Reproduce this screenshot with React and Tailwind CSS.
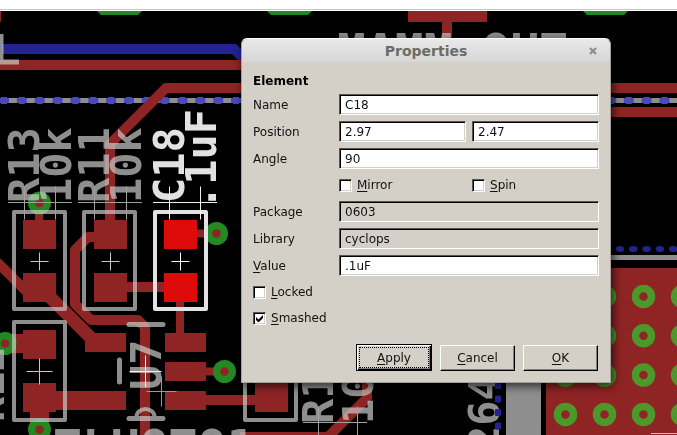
import React from "react";

const COPPER = "#8f2424";
const VIA = "#238a23";
const steps = (n) => Array.from({ length: n }, (_, i) => i);

function Via({ x, y }) {
  return (
    <g>
      <circle cx={x} cy={y} r="11.5" fill={VIA} />
      <circle cx={x} cy={y} r="4.3" fill={COPPER} />
    </g>
  );
}

function Cross({ x, y, r = 9, color = "#c8c8c8" }) {
  return <path d={`M${x - r} ${y}H${x + r}M${x} ${y - r}V${y + r}`} stroke={color} strokeWidth="1" />;
}

function Origin({ x, y, a, b, color = "#a0a0a0" }) {
  return <path d={`M${x} ${y}h64M${a} ${y - 16}v33M${b} ${y - 16}v33`} stroke={color} strokeWidth="1" />;
}

function Label({ x, y, children }) {
  return (
    <text transform={`translate(${x} ${y}) rotate(-90)`}>{children}</text>
  );
}

function Board() {
  return (
    <svg viewBox="0 11 677 424" className="block h-auto w-full" fill="none" aria-label="Circuit board">
      <g stroke="#232391" strokeWidth="10">
        <path d="M2 49H234L246 61" />
      </g>
      <path d="M0 100.5H677" stroke="#8e8e8e" strokeWidth="5" />
      <g fill="#4a4abf">
        {steps(38).map((i) => (
          <path key={i} transform={`translate(${4 + i * 17.85} 100.5)`} d="M-5-2.5h2v-1h6v1h2v5h-2v1h-6v-1h-2z" />
        ))}
      </g>
      <g stroke={COPPER} strokeWidth="10" strokeLinejoin="round">
        <path d="M0 65H245" />
        <path d="M677 88H166L110 144V222" />
        <path d="M610 112H677" />
        <path d="M-3 262L26 291" />
        <path d="M48 295L94 341" strokeWidth="13" />
        <path d="M97 237H88L75 250V304L91 320H138L145 327V435" />
        <path d="M127 287H164" />
        <path d="M206 400H256" />
        <path d="M240 437H328L367 398V380" />
        <path d="M39 203V222M180 300V334M197 233.500H216M206 371.500H224" strokeWidth="8" />
      </g>
      <g fill={COPPER}>
        <path d="M408 11h79v11h-35v20h-10V22h-34zM0 11h1v11H0z" />
        <path d="M23 220h33v29H23zM23 273h33v29H23zM94 220h33v29H94zM94 273h33v29H94z" />
        <path d="M23 330h33v29H23zM23 383h33v29H23zM56 391h70v19H56zM0 334h23v19H0zM30 412h19v20H30z" />
        <path d="M85 333h41v19H85zM165 333h41v19h-41zM165 362h41v19h-41zM165 391h41v19h-41zM255 383h33v29h-33z" />
      </g>
      <path d="M164 220h33v29h-33zM164 273h33v29h-33z" fill="#de0b0b" />
      <g fill={VIA}>
        {[97, 267, 583].map((x) => (
          <path key={x} d={`M${x} 11h45l-4 4h-37z`} />
        ))}
      </g>
      <Via x={39.5} y={203} />
      <Via x={216.5} y={233.5} />
      <Via x={5} y={343.500} />
      <Via x={39.5} y={429.5} />
      <Via x={224.5} y={371.5} />

      <g opacity="0.7" stroke="#cccccc" strokeWidth="4" strokeLinejoin="round">
        <path d="M14 212h51v97H14zM84 212h51v97H84zM14 322h51v98H14zM245 322h51v98h-51z" />
        <path d="M1 34V62M0 62H19" strokeWidth="5" />
        <path d="M129 324.500H163M129 418.500H163M119.500 360V382" strokeWidth="5" strokeLinecap="round" />
        <path d="M136.500 417A9 8 0 0 1 154.500 417" strokeWidth="4" />
        <g
          fill="#cccccc"
          stroke="none"
          className="font-['DejaVu_Sans_Mono',monospace] text-[42px] font-bold"
        >
          <Label x={39} y={203}>R13</Label>
          <Label x={71} y={203}>10k</Label>
          <Label x={109} y={203}>R11</Label>
          <Label x={141} y={203}>10k</Label>
          <Label x={161} y={390}>U7</Label>
          <Label x={4} y={422}>R12</Label>
          <Label x={333} y={424}>R1</Label>
          <Label x={373} y={424}>10</Label>
          <Label x={499} y={451}>264</Label>
          <text x="53" y="464" className="text-[48px]">TLUOTO1</text>
          <text x="337" y="68" className="text-[48px]">MAMM OUT</text>
        </g>
      </g>
      <g
        fill="#e2e2e2"
        className="font-['DejaVu_Sans_Mono',monospace] text-[42px] font-bold"
      >
        <Label x={184} y={203}>C18</Label>
        <Label x={216} y={210}>.1uF</Label>
      </g>
      <path d="M155 212h51v97h-51z" stroke="#e2e2e2" strokeWidth="4" strokeLinejoin="round" />
      <Origin x={8} y={202.500} a={24.500} b={55.500} />
      <Origin x={78} y={202.500} a={94.500} b={126.500} />
      <Origin x={153} y={202.500} a={169.500} b={200.500} color="#f0f0f0" />
      <Origin x={303} y={422.500} a={318.500} b={357.500} />
      <Cross x={39.5} y={261.5} />
      <Cross x={110.5} y={261.5} />
      <Cross x={180.5} y={261.5} color="#ffffff" />
      <Cross x={39.5} y={371.5} r={13} />
      <Cross x={145.5} y={371.5} r={16} color="#eeeeee" />
      <Cross x={161.5} y={391.5} r={15} color="#999999" />

      <g fill="#232391">
        {steps(5).map((i) => (
          <ellipse key={i} cx={620 + i * 13.3} cy="249" rx="4.300" ry="3" />
        ))}
        {steps(4).map((i) => (
          <rect key={i} x="495" y={382 + i * 13.5} width="6" height="7" rx="1" />
        ))}
      </g>
      <path d="M506 255H677V260H541V435H506z" fill="#8e8e8e" />
      <path d="M546 268H677V435H546z" fill={COPPER} />
      {steps(4).map((r) =>
        steps(4).map((c) => (
          <circle
            key={`${r}-${c}`}
            cx={565.5 + c * 39}
            cy={296.5 + r * 39.3}
            r="8"
            stroke="#4b992b"
            strokeWidth="7.5"
          />
        ))
      )}
      <path d="M651 433.500H677" stroke="#e8b0b0" />
    </svg>
  );
}

const bevel =
  "border border-t-[#555555] border-l-[#555555] border-r-white border-b-white shadow-[inset_1px_1px_0_#000,inset_-1px_-1px_0_#d4d0c8]";

function TextBox({ id, label, value, readOnly = false }) {
  return (
    <input
      id={id}
      type="text"
      aria-label={label}
      defaultValue={value}
      readOnly={readOnly}
      className={`h-[21px] w-full min-w-0 px-[5px] outline-none ${bevel} ${readOnly ? "bg-[#d4d0c8]" : "bg-white"}`}
    />
  );
}

function Mnemonic({ text }) {
  return (
    <span>
      <span className="underline underline-offset-2">{text[0]}</span>
      {text.slice(1)}
    </span>
  );
}

function CheckBox({ text, checked = false }) {
  return (
    <label className="flex h-5 items-center gap-[5px]">
      <span className="relative flex">
        <input
          type="checkbox"
          defaultChecked={checked}
          className={`peer size-[13px] appearance-none bg-white ${bevel}`}
        />
        <svg viewBox="0 0 13 13" className="pointer-events-none absolute inset-0 hidden size-[13px] peer-checked:block">
          <path d="M3 5v3l2 2h1l4-4V3L5.500 7.500z" fill="#000" />
        </svg>
      </span>
      <Mnemonic text={text} />
    </label>
  );
}

function Row({ id, label, children }) {
  return (
    <div className="grid grid-cols-[80px_1fr] items-center gap-x-[6px]">
      <label htmlFor={id}>{label}</label>
      {children}
    </div>
  );
}

function PushButton({ text }) {
  return (
    <button
      type="button"
      className="h-[26px] w-[75px] border border-t-white border-l-white border-r-black border-b-black bg-[#d4d0c8] shadow-[inset_-1px_-1px_0_#808080]"
    >
      <Mnemonic text={text} />
    </button>
  );
}

function PropertiesDialog() {
  return (
    <form
      role="dialog"
      aria-labelledby="dialog-title"
      className="absolute top-[27px] left-[241px] w-[370px] rounded-t-md border border-[#a5a29c] border-t-white bg-[#d4d0c8] font-['DejaVu_Sans',sans-serif] text-xs text-[#111111] shadow-[2px_3px_10px_rgba(0,0,0,0.7)]"
    >
      <header className="relative flex h-[23px] items-center justify-center rounded-t-md bg-linear-to-b from-[#e9e9e9] to-[#d6d6d6]">
        <h1 id="dialog-title" className="text-sm font-bold text-[#6c6c66]">
          Properties
        </h1>
        <button type="button" aria-label="Close" className="absolute right-3 flex size-[10px] items-center justify-center">
          <svg viewBox="0 0 10 10" className="size-[10px]">
            <path d="M2 2L8 8M8 2L2 8" stroke="#8e8e8a" strokeWidth="2.200" />
          </svg>
        </button>
      </header>
      <div className="flex flex-col gap-[6px] px-[11px] pt-[12px] pb-[11px]">
        <h2 className="flex h-[14px] items-center font-bold text-black">Element</h2>
        <Row id="name" label="Name">
          <TextBox id="name" value="C18" />
        </Row>
        <Row id="position-x" label="Position">
          <div className="grid grid-cols-2 gap-[6px]">
            <TextBox id="position-x" value="2.97" />
            <TextBox id="position-y" label="Position Y" value="2.47" />
          </div>
        </Row>
        <Row id="angle" label="Angle">
          <TextBox id="angle" value="90" />
        </Row>
        <div className="grid grid-cols-2 gap-[6px] pl-[86px]">
          <CheckBox text="Mirror" />
          <CheckBox text="Spin" />
        </div>
        <Row id="package" label="Package">
          <TextBox id="package" value="0603" readOnly />
        </Row>
        <Row id="library" label="Library">
          <TextBox id="library" value="cyclops" readOnly />
        </Row>
        <Row id="value" label={<Mnemonic text="Value" />}>
          <TextBox id="value" value=".1uF" />
        </Row>
        <CheckBox text="Locked" />
        <CheckBox text="Smashed" checked />
        <div className="mt-[10px] flex items-center justify-end gap-2 pr-px">
          <button
            type="button"
            className="h-[27px] w-[76px] border border-black bg-[#d4d0c8] p-[2px] shadow-[inset_1px_1px_0_#fff,inset_-1px_-1px_0_#000,inset_-2px_-2px_0_#808080]"
          >
            <span className="flex h-full items-center justify-center border border-dotted border-black">
              <Mnemonic text="Apply" />
            </span>
          </button>
          <PushButton text="Cancel" />
          <PushButton text="OK" />
        </div>
      </div>
    </form>
  );
}

export default function App() {
  return (
    <div className="flex min-h-screen flex-col bg-black">
      <div className="h-[11px] shrink-0 border-b border-white bg-white">
        <div className="h-[10px] border-b border-[#c9c9c2]" />
      </div>
      <main className="relative flex-1 overflow-hidden">
        <Board />
        <PropertiesDialog />
      </main>
    </div>
  );
}
